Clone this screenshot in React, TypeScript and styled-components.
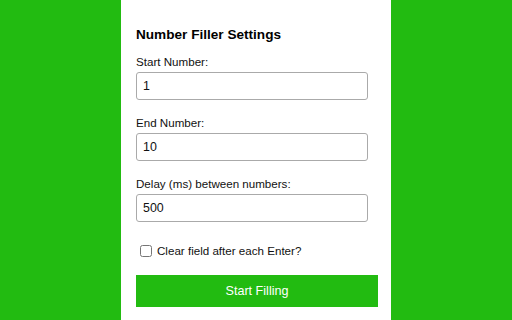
import { createGlobalStyle, styled } from 'styled-components';

const GlobalStyle = createGlobalStyle`
  html, body {
    margin: 0;
    padding: 0;
    height: 100%;
  }

  body {
    background: #22bb11;
    font-family: 'Liberation Sans', Arial, sans-serif;
    color: #111;
  }
`;

const Panel = styled.main`
  width: 270px;
  min-height: 320px;
  margin: 0 auto;
  box-sizing: border-box;
  padding: 27px 13px 0 15px;
  background: #ffffff;
`;

const Title = styled.h3`
  margin: 0 0 12px;
  font-size: 13.6px;
  line-height: 16px;
  font-weight: 700;
  color: #000;
`;

const Field = styled.div`
  margin-bottom: 16px;
`;

const Label = styled.label`
  display: block;
  font-size: 11.6px;
  line-height: 14px;
  margin-bottom: 3px;
`;

const Input = styled.input`
  display: block;
  width: 232px;
  height: 28px;
  box-sizing: border-box;
  border: 1px solid #aaaaaa;
  border-radius: 3px;
  padding: 0 6px;
  font-family: inherit;
  font-size: 12.4px;
  color: #111;
  outline: none;
`;

const CheckRow = styled.label`
  display: flex;
  align-items: center;
  margin-top: 22px;
  font-size: 11.6px;
  line-height: 14px;
`;

const Check = styled.input`
  width: 12px;
  height: 12px;
  margin: 0 5px 0 4px;
`;

const StartButton = styled.button`
  display: block;
  width: 242px;
  height: 32px;
  margin-top: 17px;
  border: none;
  background: #22bb11;
  color: #ffffff;
  font-family: inherit;
  font-size: 12.6px;
  cursor: pointer;
`;

const fields = [
  { id: 'start', label: 'Start Number:', value: '1' },
  { id: 'end', label: 'End Number:', value: '10' },
  { id: 'delay', label: 'Delay (ms) between numbers:', value: '500' },
];

const App = () => {
  return (
    <>
      <GlobalStyle />
      <Panel>
        <Title>Number Filler Settings</Title>
        {fields.map((f) => (
          <Field key={f.id}>
            <Label htmlFor={f.id}>{f.label}</Label>
            <Input id={f.id} type="text" defaultValue={f.value} />
          </Field>
        ))}
        <CheckRow>
          <Check type="checkbox" />
          Clear field after each Enter?
        </CheckRow>
        <StartButton>Start Filling</StartButton>
      </Panel>
    </>
  );
};

export default App;
